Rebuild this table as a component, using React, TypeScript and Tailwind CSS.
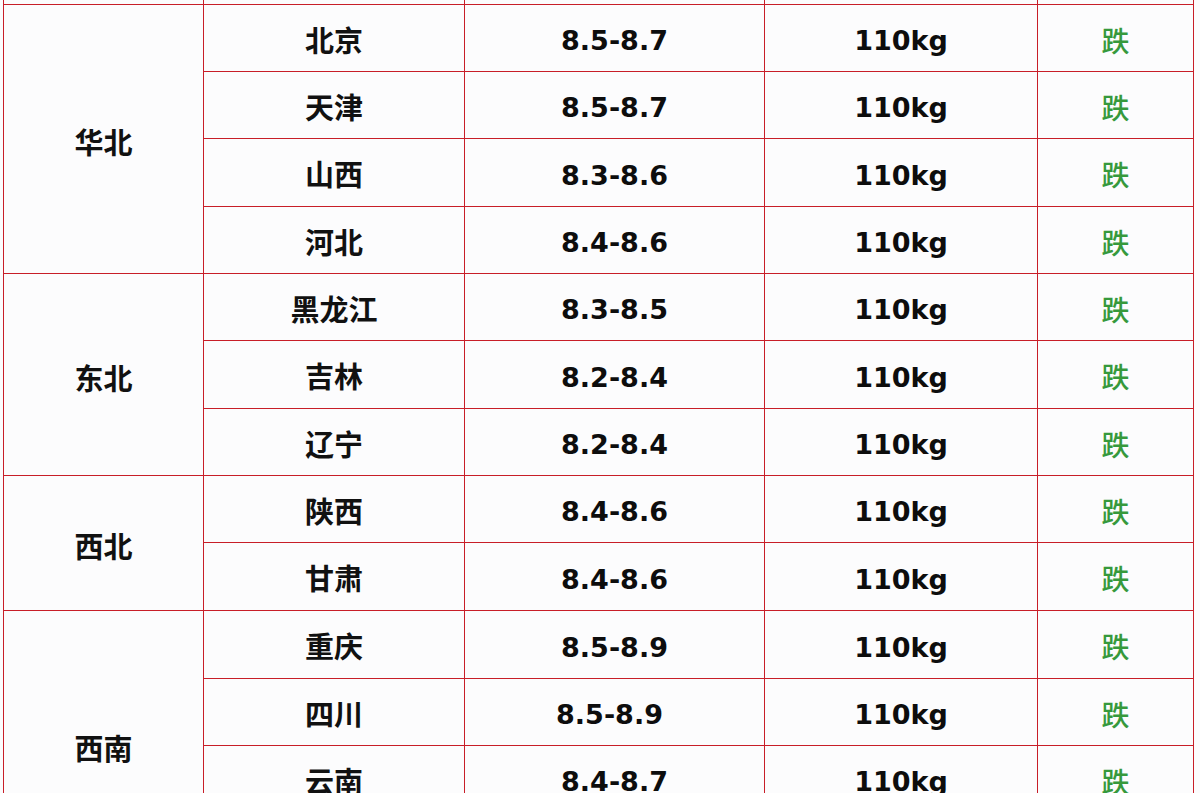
import React from "react";

type Row = { city: string; price: string; shift?: boolean };
type Group = { region: string; rows: Row[] };

const groups: Group[] = [
  {
    region: "华北",
    rows: [
      { city: "北京", price: "8.5-8.7" },
      { city: "天津", price: "8.5-8.7" },
      { city: "山西", price: "8.3-8.6" },
      { city: "河北", price: "8.4-8.6" },
    ],
  },
  {
    region: "东北",
    rows: [
      { city: "黑龙江", price: "8.3-8.5" },
      { city: "吉林", price: "8.2-8.4" },
      { city: "辽宁", price: "8.2-8.4" },
    ],
  },
  {
    region: "西北",
    rows: [
      { city: "陕西", price: "8.4-8.6" },
      { city: "甘肃", price: "8.4-8.6" },
    ],
  },
  {
    region: "西南",
    rows: [
      { city: "重庆", price: "8.5-8.9" },
      { city: "四川", price: "8.5-8.9", shift: true },
      { city: "云南", price: "8.4-8.7" },
      { city: "贵州", price: "8.4-8.7" },
    ],
  },
];

const cjk = "font-['Noto_Sans_CJK_SC',sans-serif]";
const num = "font-['DejaVu_Sans','Noto_Sans_CJK_SC',sans-serif]";
const cell = "bg-[#fcfcfd] flex items-center justify-center";

const spans: Record<number, string> = {
  2: "row-span-2",
  3: "row-span-3",
  4: "row-span-4",
};

export default function App() {
  return (
    <div className="h-[793px] w-[1200px] overflow-hidden bg-[#fcfcfd]">
      <div className="ml-[3px] -mt-[63px] grid w-fit grid-cols-[199px_260px_299px_272px_155px] grid-rows-[66px_66px_66px_67px_66px_66px_67px_66px_66px_67px_67px_66px_66px_66px] gap-px bg-[#c81e28] p-px">
        {/* row cut off above the top edge */}
        <div className={cell} />
        <div className={cell} />
        <div className={cell} />
        <div className={cell} />
        <div className={cell} />

        {groups.map((g) => (
          <React.Fragment key={g.region}>
            <div
              className={`${cell} ${spans[g.rows.length]} ${cjk} pt-[6px] text-[29px] font-bold text-[#111]`}
            >
              {g.region}
            </div>
            {g.rows.map((r) => (
              <React.Fragment key={r.city}>
                <div
                  className={`${cell} col-start-2 ${cjk} pt-[3px] text-[29px] font-bold text-[#111]`}
                >
                  {r.city}
                </div>
                <div
                  className={`${cell} ${num} pt-[7px] text-[27px] font-bold text-[#0d0d0d] ${
                    r.shift ? "pr-[10px]" : ""
                  }`}
                >
                  {r.price}
                </div>
                <div className={`${cell} ${num} pt-[7px] text-[27px] font-bold text-[#0d0d0d]`}>
                  110kg
                </div>
                <div className={`${cell} ${cjk} pt-[3px] text-[28px] font-medium text-[#36993c]`}>
                  跌
                </div>
              </React.Fragment>
            ))}
          </React.Fragment>
        ))}
      </div>
    </div>
  );
}
